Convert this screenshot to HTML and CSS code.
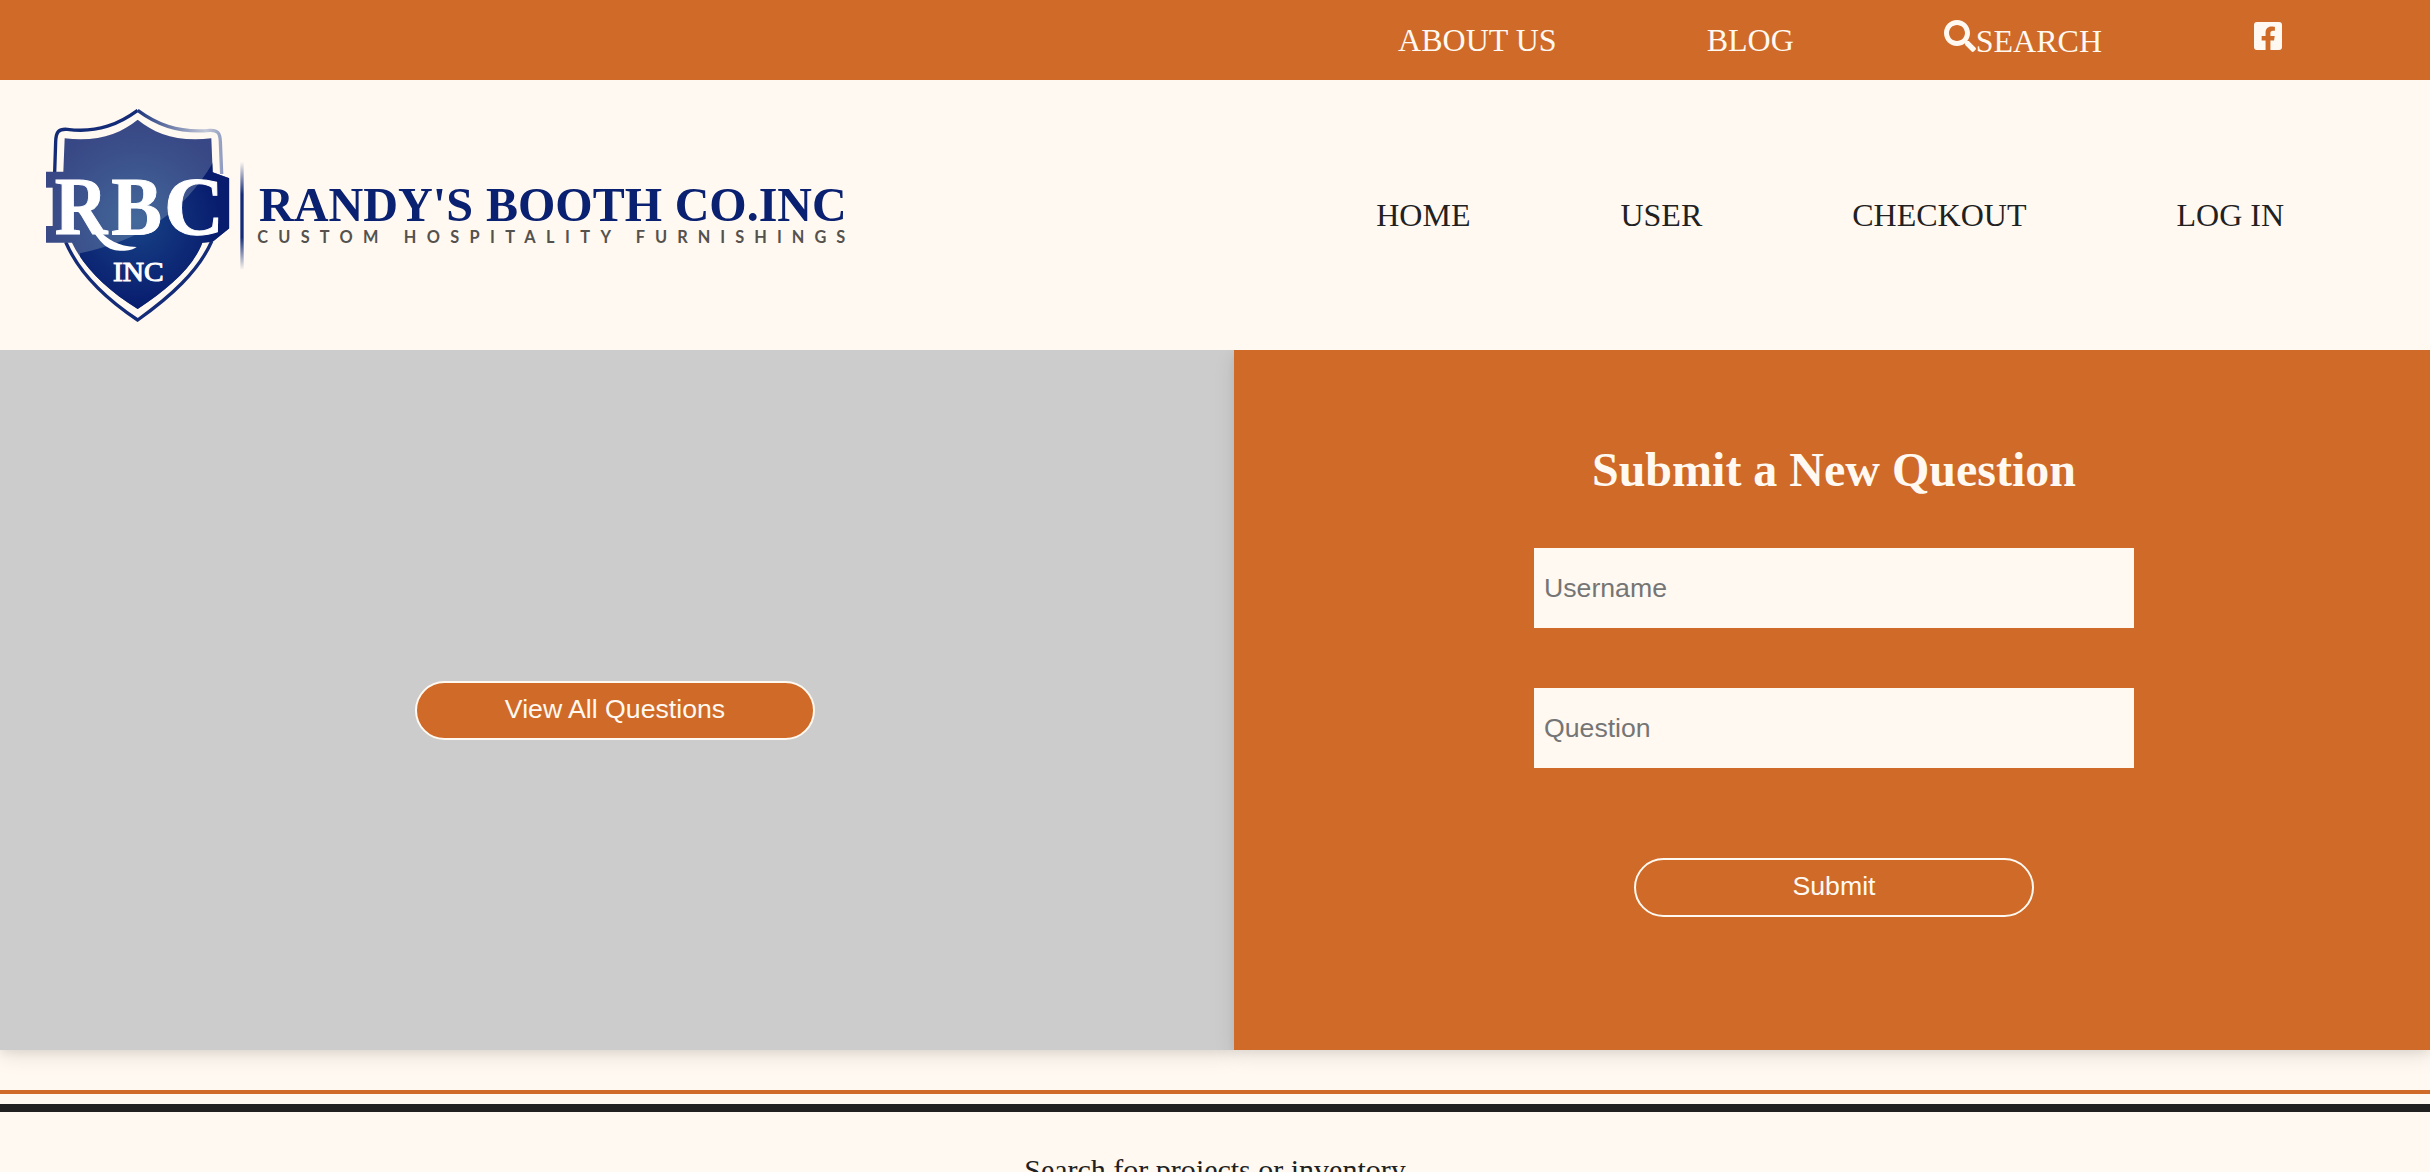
FILE: index.html
```html
<!DOCTYPE html>
<html lang="en">
<head>
<meta charset="utf-8">
<title>Randy's Booth Co. Inc</title>
<link rel="stylesheet" href="styles.css">
</head>
<body>
<nav class="topbar">
  <a class="topbar-link">ABOUT US</a>
  <a class="topbar-link">BLOG</a>
  <a class="topbar-link search">
    <svg class="icon-search" viewBox="0 0 512 512"><path fill="currentColor" d="M505 442.7L405.3 343c-4.5-4.5-10.6-7-17-7H372c27.6-35.3 44-79.7 44-128C416 93.1 322.9 0 208 0S0 93.1 0 208s93.1 208 208 208c48.3 0 92.7-16.4 128-44v16.3c0 6.4 2.5 12.5 7 17l99.7 99.7c9.4 9.4 24.6 9.4 33.9 0l28.3-28.3c9.4-9.4 9.4-24.6.1-34zM208 336c-70.7 0-128-57.2-128-128 0-70.7 57.2-128 128-128 70.7 0 128 57.2 128 128 0 70.7-57.2 128-128 128z"/></svg><span class="search-label">SEARCH</span>
  </a>
  <a class="topbar-link social">
    <svg class="icon-facebook" viewBox="0 0 448 512"><path fill="currentColor" d="M400 32H48A48 48 0 0 0 0 80v352a48 48 0 0 0 48 48h137.25V327.69h-63V256h63v-54.64c0-62.15 37-96.48 93.67-96.48 27.14 0 55.52 4.84 55.52 4.84v61h-31.27c-30.81 0-40.42 19.12-40.42 38.73V256h68.78l-11 71.69h-57.78V480H400a48 48 0 0 0 48-48V80a48 48 0 0 0-48-48z"/></svg>
  </a>
</nav>
<header class="header">
  <svg class="logo" viewBox="48 57 2403 636">
    <defs>
      <radialGradient id="light" gradientUnits="userSpaceOnUse" cx="320" cy="390" r="300">
        <stop offset="0" stop-color="#43699b"/><stop offset=".5" stop-color="#3d568f"/><stop offset="1" stop-color="#384785"/>
      </radialGradient>
      <radialGradient id="dark" gradientUnits="userSpaceOnUse" cx="320" cy="400" r="250">
        <stop offset="0" stop-color="#174386"/><stop offset=".5" stop-color="#102f7a"/><stop offset="1" stop-color="#081d6e"/>
      </radialGradient>
      <linearGradient id="fade" gradientUnits="userSpaceOnUse" x1="330" y1="0" x2="578" y2="0">
        <stop offset="0" stop-color="#243b80"/><stop offset=".8" stop-color="#c4c9d9"/><stop offset="1" stop-color="#8f9bc0"/>
      </linearGradient>
      <linearGradient id="bar" x1="0" y1="0" x2="0" y2="1">
        <stop offset="0" stop-color="#142c78" stop-opacity="0"/><stop offset=".3" stop-color="#142c78"/><stop offset=".7" stop-color="#142c78"/><stop offset="1" stop-color="#142c78" stop-opacity="0"/>
      </linearGradient>
      <clipPath id="shape">
        <path d="M323 89C270 132 205 156 104 145L100 245H48V458H126C160 530 230 600 323 657C415 595 488 535 517 458L548 455L598 415V265L548 247L544 145C440 156 376 132 323 89Z"/>
      </clipPath>
    </defs>
    <path class="outline" d="M323 61C270 100 205 130 112 118C86 116 78 125 77 155L74 247"/>
    <path class="outline" stroke="url(#fade)" d="M323 61C376 100 440 130 540 121C564 120 570 130 571 155L575 252"/>
    <path class="outline" d="M107 456C145 545 225 625 323 690C421 620 505 545 545 454"/>
    <g clip-path="url(#shape)">
      <rect x="48" y="57" width="552" height="636" fill="url(#light)"/>
      <path fill="url(#dark)" d="M150 490C330 450 460 370 550 215L610 215V693H150Z"/>
    </g>
    <path fill="#fff9f1" d="M48 293H68V408H48Z"/>
    <text class="mono" x="74" y="433" font-size="247" textLength="158" lengthAdjust="spacingAndGlyphs">R</text>
    <path fill="#fff" d="M140 350C190 380 208 468 320 471C302 486 250 489 222 464C190 434 170 385 138 360Z"/>
    <text class="mono" x="244" y="433" font-size="247" textLength="152" lengthAdjust="spacingAndGlyphs">B</text>
    <text class="mono" x="402" y="433" font-size="247" textLength="180" lengthAdjust="spacingAndGlyphs">C</text>
    <text class="mono-inc" x="249" y="573" font-size="84" textLength="152" lengthAdjust="spacingAndGlyphs">INC</text>
    <rect x="631" y="215" width="10" height="325" fill="url(#bar)"/>
    <g class="brand" font-size="147">
      <text x="687" y="393" textLength="642" lengthAdjust="spacingAndGlyphs">RANDY'S</text>
      <text x="1368" y="393" textLength="528" lengthAdjust="spacingAndGlyphs">BOOTH</text>
      <text x="1934" y="393" textLength="516" lengthAdjust="spacingAndGlyphs">CO.INC</text>
    </g>
    <g class="tagline" font-size="49">
      <text x="682" y="460" textLength="390">CUSTOM</text>
      <text x="1121" y="460" textLength="649">HOSPITALITY</text>
      <text x="1817" y="460" textLength="656">FURNISHINGS</text>
    </g>
  </svg>
  <nav class="menu">
    <a>HOME</a><a>USER</a><a>CHECKOUT</a><a>LOG IN</a>
  </nav>
</header>
<main class="panels">
  <section class="panel panel-view">
    <button class="button">View All Questions</button>
  </section>
  <form class="panel panel-form">
    <h2 class="form-title">Submit a New Question</h2>
    <input class="field" type="text" placeholder="Username">
    <input class="field" type="text" placeholder="Question">
    <button class="button button-submit" type="button">Submit</button>
  </form>
</main>
<footer class="footer">
  <div class="rule-orange"></div>
  <div class="rule-dark"></div>
  <p class="footer-text">Search for projects or inventory</p>
</footer>
</body>
</html>
```
FILE: styles.css
```css
* {
  box-sizing: border-box;
}

body {
  margin: 0;
  height: 1172px;
  overflow: hidden;
  background: #fff9f1;
  color: #212121;
  font-family: "Liberation Serif", "Times New Roman", serif;
  font-size: 32px;
}

.topbar {
  display: flex;
  justify-content: flex-end;
  gap: 150px;
  height: 80px;
  padding: 20px 148px 0 0;
  background: #cf6a28;
  color: #fff9f1;
}

.topbar-link {
  display: flex;
  align-items: flex-start;
  line-height: 40px;
}

.icon-search {
  width: 32px;
  height: 32px;
}

.search-label {
  padding-top: 1px;
}

.social {
  margin-left: 2px;
}

.icon-facebook {
  width: 28px;
  height: 32px;
}

.header {
  position: relative;
  z-index: 1;
  display: flex;
  align-items: center;
  justify-content: space-between;
  height: 270px;
  padding: 0 146px 0 46px;
  background: #fff9f1;
}

.logo {
  width: 801px;
  height: 212px;
  overflow: visible;
}

.outline {
  fill: none;
  stroke-width: 10;
}

.outline:not([stroke]) {
  stroke: #142c78;
}

.mono,
.mono-inc {
  fill: #fff;
  stroke: #fff;
  stroke-width: 3;
  font-weight: 700;
}

.mono-inc {
  font-weight: 400;
}

.brand {
  fill: #0a2070;
  font-weight: 700;
}

.tagline {
  fill: #55524e;
  font-family: Lato, sans-serif;
  font-weight: 700;
  letter-spacing: 27px;
}

.menu {
  display: flex;
  gap: 150px;
}

.panels {
  display: flex;
  height: 700px;
}

.panel {
  display: flex;
  flex-direction: column;
  align-items: center;
  box-shadow: 0 4px 8px rgba(0, 0, 0, 0.05), 0 6px 20px rgba(0, 0, 0, 0.1);
}

.panel-view {
  width: 1234px;
  padding: 331px 4px 0 0;
  background: #ccc;
}

.panel-form {
  flex: 1;
  padding: 92px 0 0 4px;
  background: #cf6a28;
}

.form-title {
  margin: 0 0 50px;
  color: #fff9f1;
  font-size: 48px;
  line-height: 56px;
}

.field {
  width: 600px;
  height: 80px;
  margin: 0 0 60px;
  padding: 0 10px;
  border: 0;
  background: #fff9f1;
  font: 26.667px "Liberation Sans", Arial, sans-serif;
}

.field::placeholder {
  color: #757575;
}

.button {
  width: 400px;
  height: 59px;
  padding: 0 0 2px;
  border: 2px solid #fff9f1;
  border-radius: 30px;
  background: #cf6a28;
  color: #fff9f1;
  font: 26.667px "Liberation Sans", Arial, sans-serif;
}

.button-submit {
  margin-top: 30px;
}

.footer {
  padding-top: 40px;
}

.rule-orange {
  height: 4px;
  background: #cf6a28;
}

.rule-dark {
  height: 8px;
  margin-top: 10px;
  background: #212121;
}

.footer-text {
  margin: 40px 0 0;
  font-size: 30px;
  line-height: 36px;
  text-align: center;
}
```
